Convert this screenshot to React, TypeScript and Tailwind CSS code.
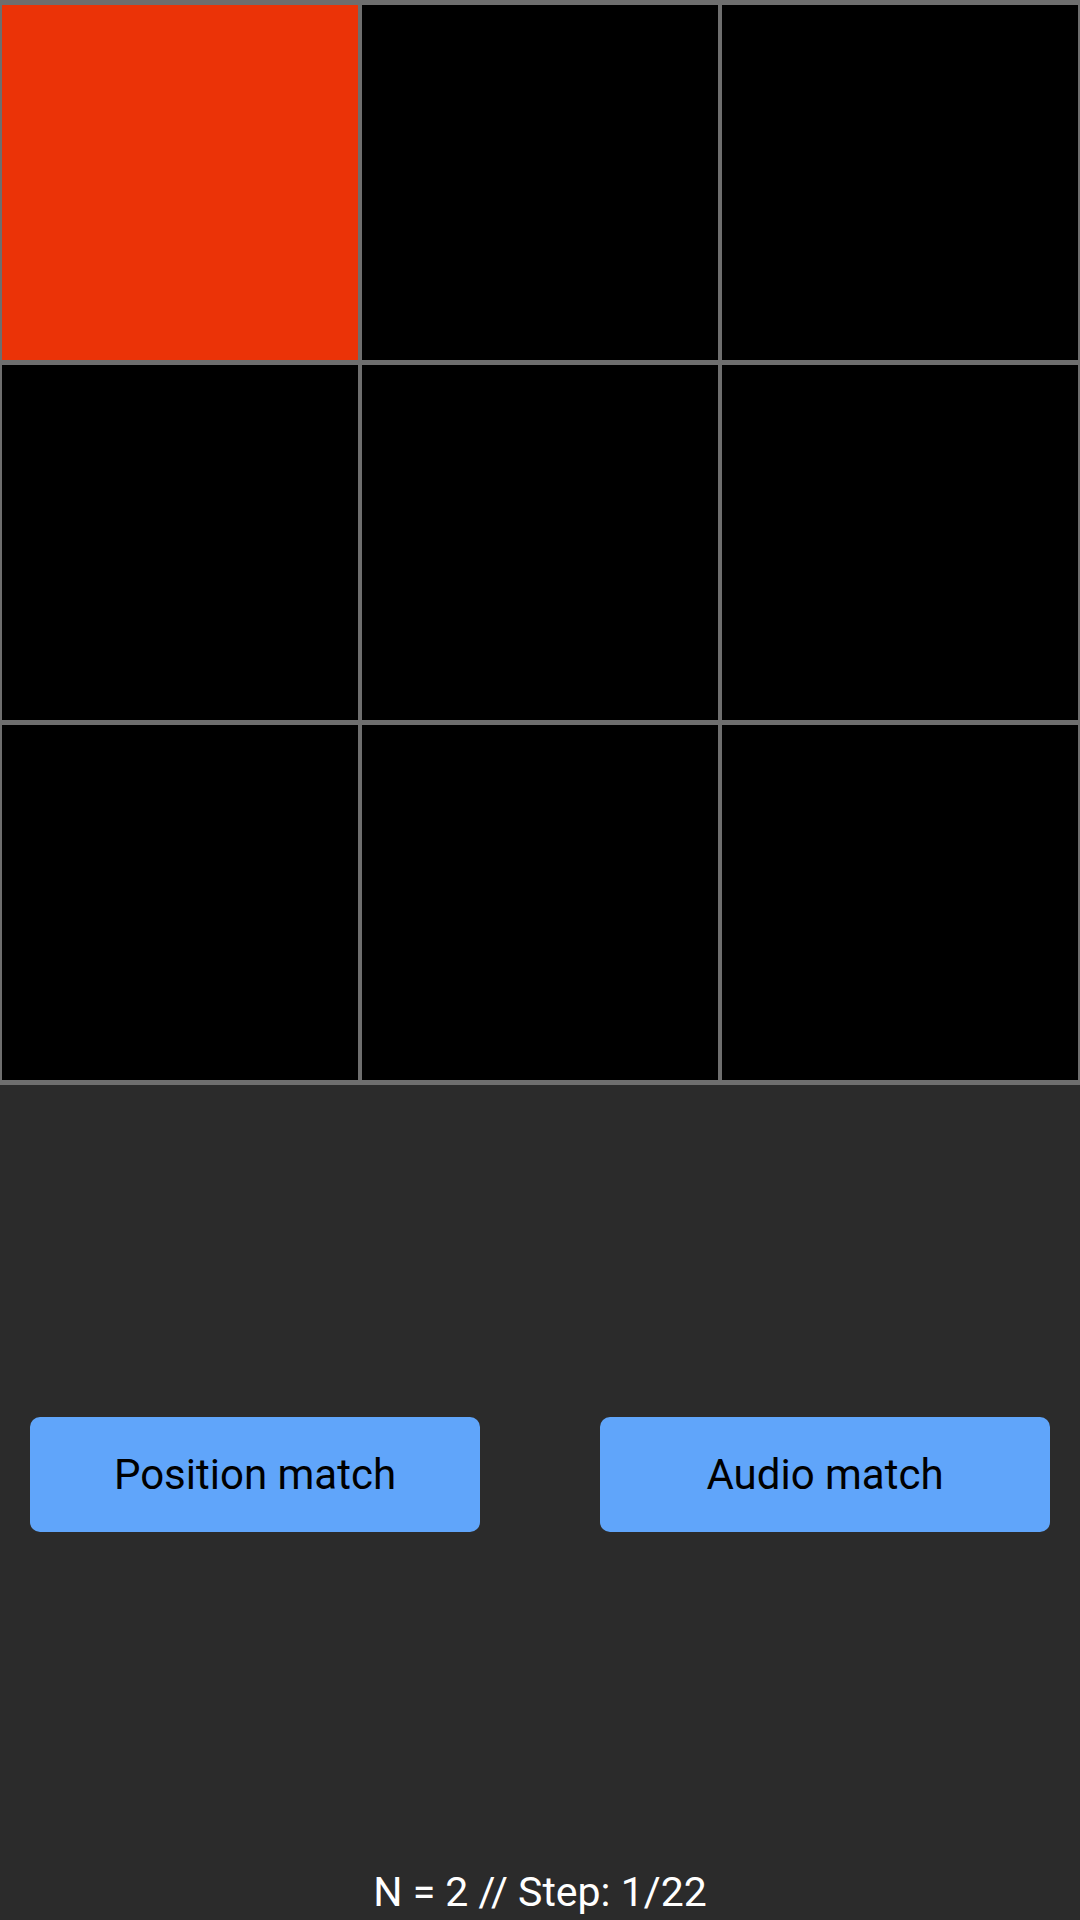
import React from 'react';

const cells = Array.from({ length: 9 }, (_, i) => i);

export default function App() {
  const active = 0;

  return (
    <div
      className="flex h-screen w-full flex-col bg-[#2b2b2b]"
      style={{ fontFamily: 'Roboto, "Noto Sans", sans-serif' }}
    >
      <div className="grid grid-cols-3 gap-x-[4px] gap-y-[5px] bg-[#6e6e6e] px-[2px] py-[5px]">
        {cells.map((i) => (
          <div
            key={i}
            className={i === active ? 'h-[355px] bg-[#eb3307]' : 'h-[355px] bg-black'}
          />
        ))}
      </div>

      <div className="flex flex-1 items-center justify-between px-[30px] pb-[6px]">
        <button className="h-[115px] w-[450px] rounded-[10px] bg-[#60a5fa] text-[42px] text-black">
          Position match
        </button>
        <button className="h-[115px] w-[450px] rounded-[10px] bg-[#60a5fa] text-[42px] text-black">
          Audio match
        </button>
      </div>

      <div className="pb-[4px] text-center text-[41px] leading-[47px] text-white">
        N = 2 // Step: 1/22
      </div>
    </div>
  );
}
